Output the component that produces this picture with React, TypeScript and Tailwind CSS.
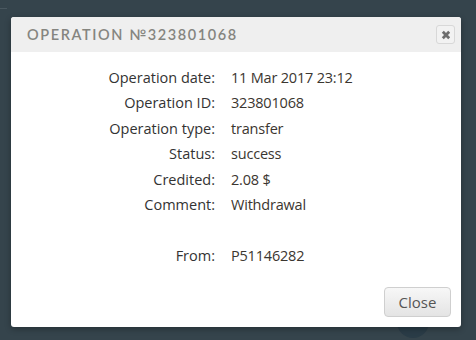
import React from "react";

const rows: [string, string][] = [
  ["Operation date:", "11 Mar 2017 23:12"],
  ["Operation ID:", "323801068"],
  ["Operation type:", "transfer"],
  ["Status:", "success"],
  ["Credited:", "2.08 $"],
  ["Comment:", "Withdrawal"],
  ["", ""],
  ["From:", "P51146282"],
];

export default function App() {
  return (
    <div className="relative w-[476px] h-[340px] overflow-hidden bg-[#35444c] pt-[17px] pl-[11px]">
      <div className="absolute left-0 top-[8px] w-[7px] h-px bg-[#4a5860]" />
      <div className="absolute left-[397px] top-[306px] w-[32px] h-[32px] rounded-full bg-[#2a3c47]" />
      <div
        className="relative w-[450px] h-[310px] bg-white rounded-[3px] flex flex-col overflow-hidden shadow-[0_2px_6px_rgba(0,0,0,0.3)]"
        style={{ fontFamily: '"Open Sans", "Liberation Sans", sans-serif' }}
      >
        <div className="h-[35px] shrink-0 bg-[#efefef] flex items-center justify-between pl-[16px] pr-[6px]">
          <div
            className="text-[14.5px] uppercase tracking-[1.6px] text-[#858580] font-semibold"
            style={{ fontFamily: 'Lato, "Noto Sans", sans-serif' }}
          >
            Operation №323801068
          </div>
          <button className="w-[19px] h-[19px] rounded-[3px] border border-[#d8d8d8] bg-[#f2f2f2] flex items-center justify-center">
            <svg width="10" height="10" viewBox="0 0 10 10">
              <path d="M1.8 1.8 L8.2 8.2 M8.2 1.8 L1.8 8.2" stroke="#6e6e6e" strokeWidth="2.8" strokeLinecap="butt" />
            </svg>
          </button>
        </div>
        <div className="flex-1 flex flex-col pt-[13px]">
          <div className="grid grid-cols-[204px_auto] gap-x-[16px]">
            {rows.map(([k, v], i) => (
              <React.Fragment key={i}>
                <div className="h-[25.5px] flex items-center justify-end text-[14.5px] text-[#333333]">{k}</div>
                <div className="h-[25.5px] flex items-center text-[14.5px] tracking-[-0.2px] text-[#3b3630]">{v}</div>
              </React.Fragment>
            ))}
          </div>
          <div className="flex-1" />
          <div className="flex justify-end pr-[10px] pb-[10px]">
            <button className="w-[67px] h-[30px] rounded-[4px] border border-[#cfcfcf] bg-gradient-to-b from-[#f7f7f7] to-[#e4e4e4] text-[15px] text-[#555555]">
              Close
            </button>
          </div>
        </div>
      </div>
    </div>
  );
}
